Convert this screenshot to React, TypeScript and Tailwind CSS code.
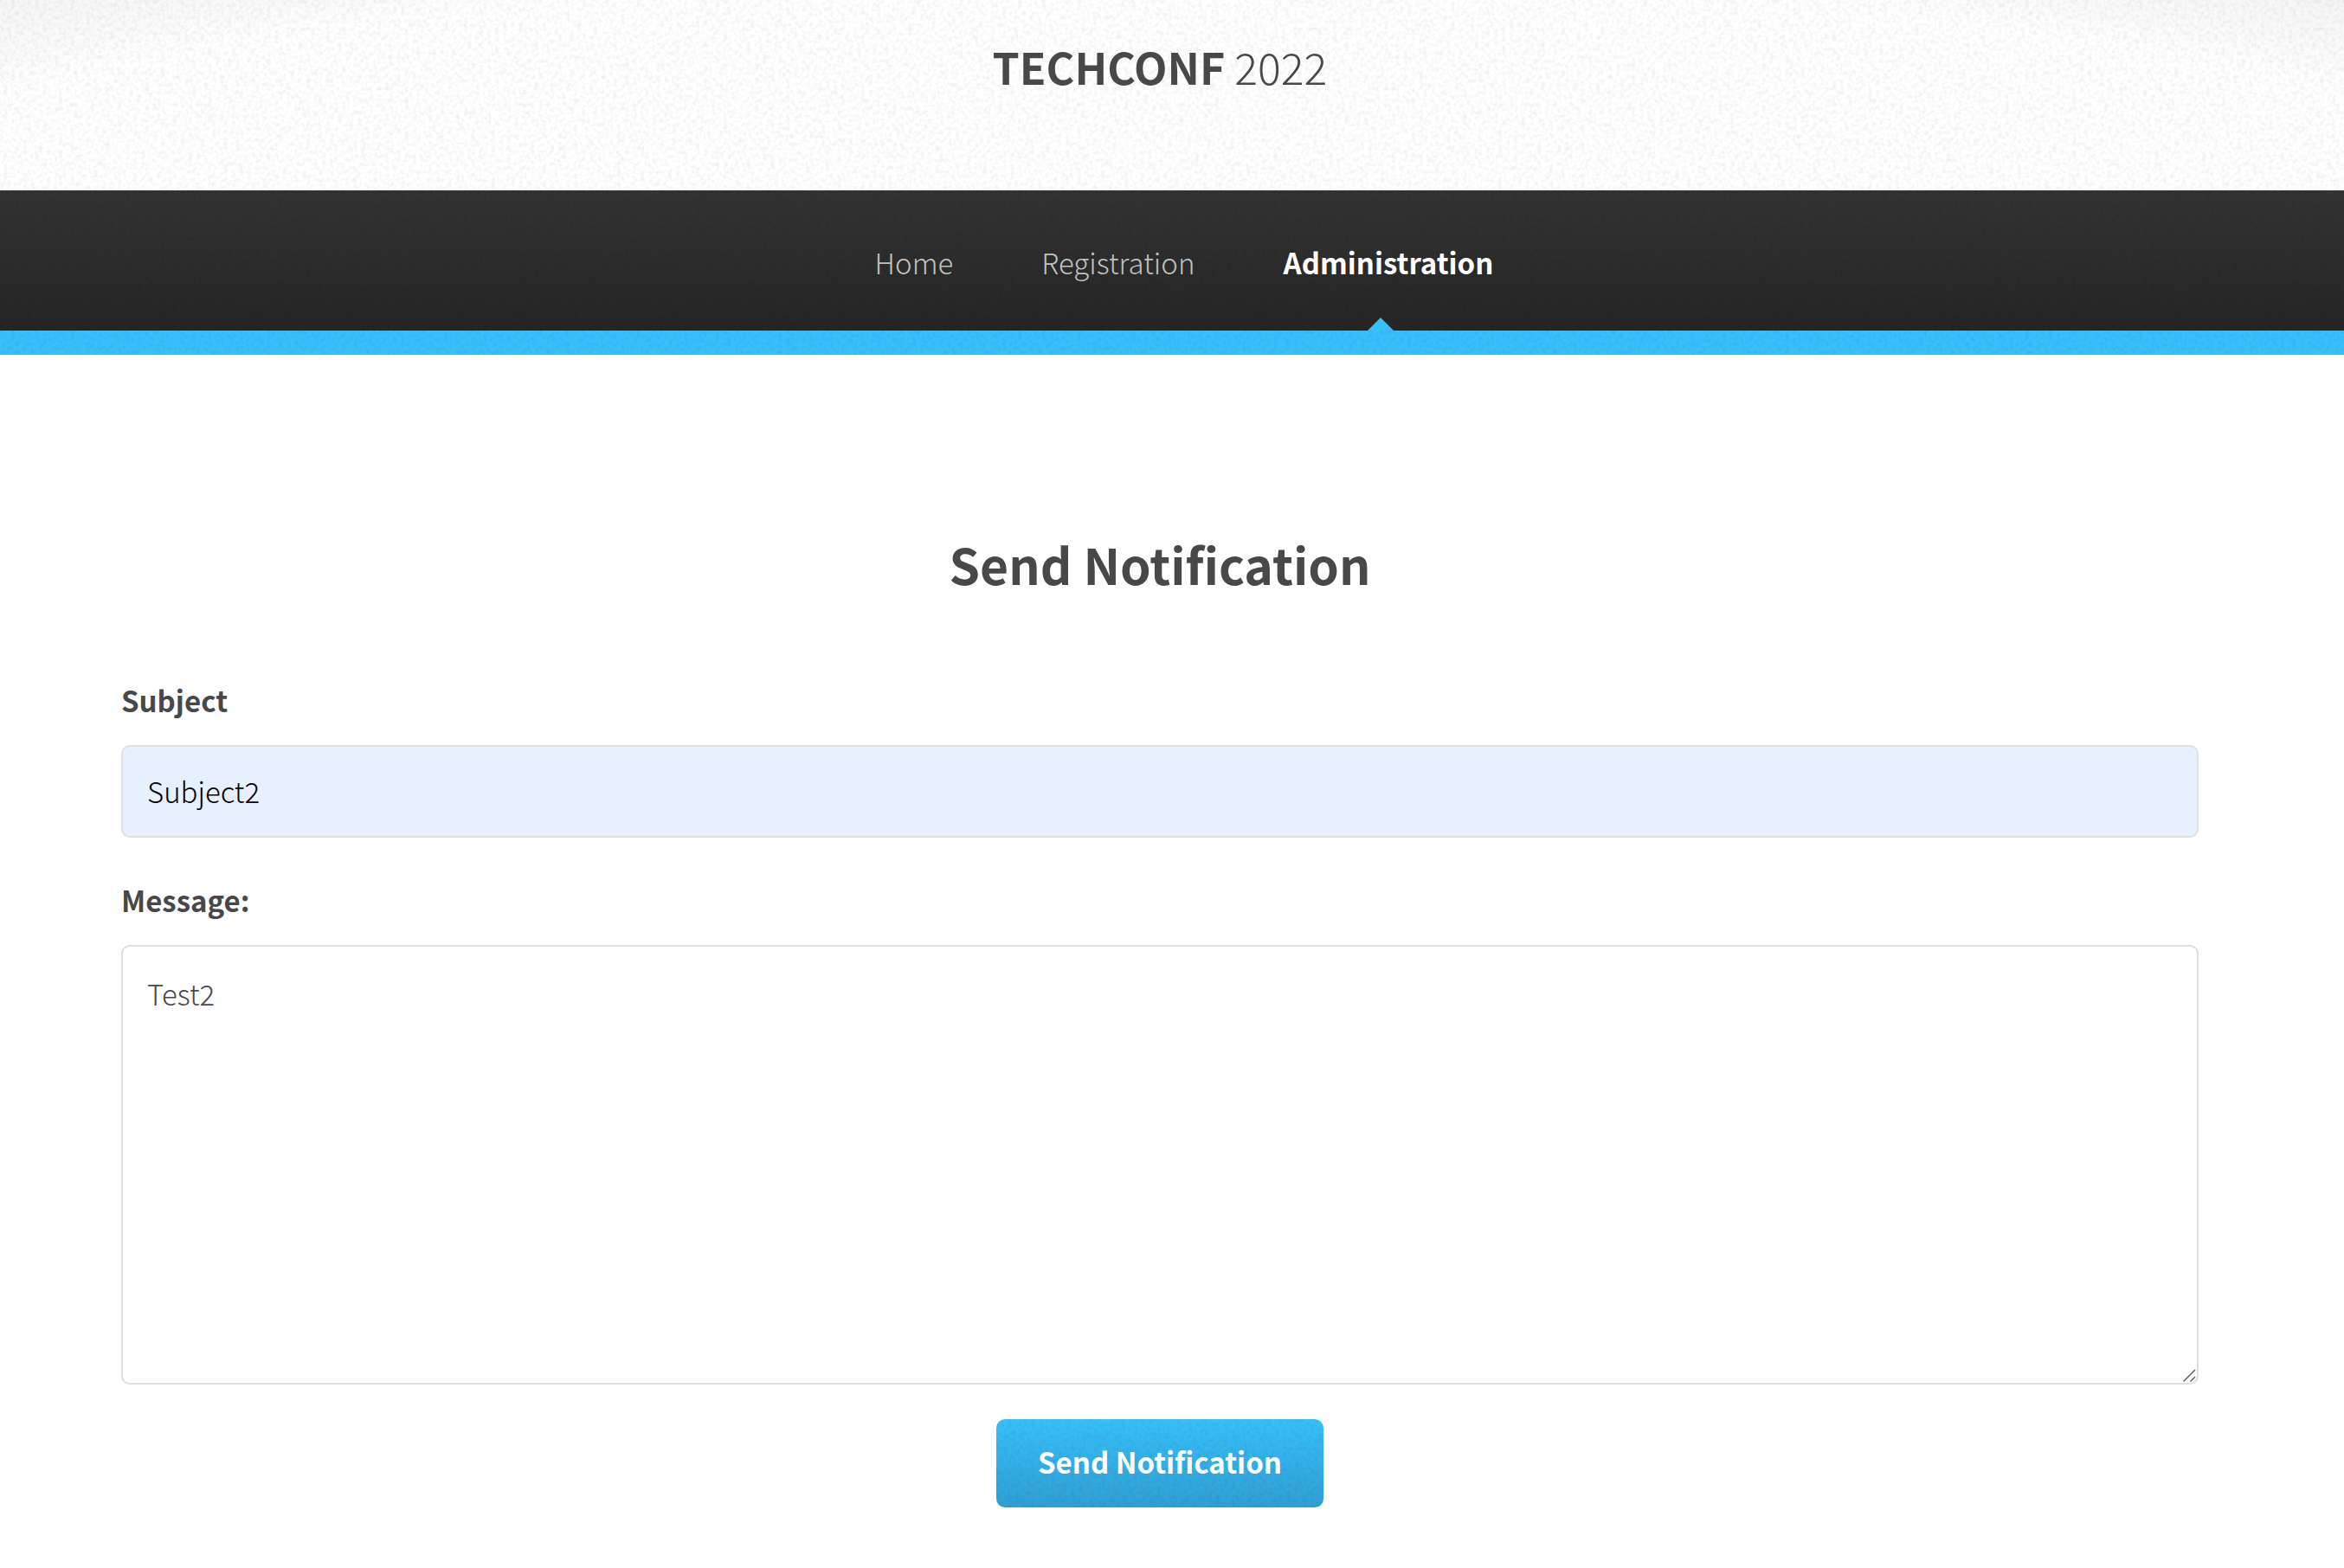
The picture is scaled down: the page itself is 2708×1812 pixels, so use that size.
import { useId } from "react";

const FONT = "font-['Source_Sans_Pro','Noto_Sans_CJK_SC','Noto_Sans',sans-serif]";

function Grain() {
  const id = useId();
  return (
    <svg aria-hidden="true" className="pointer-events-none absolute inset-0 size-full">
      <filter id={id} x="0" y="0" width="100%" height="100%">
        <feTurbulence type="fractalNoise" baseFrequency="0.22" numOctaves="2" seed="4" stitchTiles="stitch" />
        <feColorMatrix values="0 0 0 0 0  0 0 0 0 0  0 0 0 0 0  0.14 0 0 0 -0.058" />
      </filter>
      <rect width="100%" height="100%" filter={`url(#${id})`} />
    </svg>
  );
}

const links = [
  { label: "Home", active: false },
  { label: "Registration", active: false },
  { label: "Administration", active: true },
];

export default function App() {
  return (
    <div className={`min-h-screen bg-white text-[33px] leading-[56px] font-light text-[#484848] ${FONT}`}>
      <header className="relative bg-[radial-gradient(ellipse_at_50%_100%,#ffffff_78%,#f5f5f5_100%)] pt-11 pr-7 pb-28 text-center">
        <Grain />
        <h1 className="relative text-[50px] leading-[64px]">
          <a href="#">
            <strong className="font-bold">TECHCONF</strong> 2022
          </a>
        </h1>
      </header>

      <nav className="relative bg-linear-to-b from-[#333333] to-[#252525] pr-7">
        <Grain />
        <ul className="relative flex justify-center gap-[102px] pl-14">
          {links.map((l) => (
            <li key={l.label} className="relative pt-[55px] pb-[51px]">
              <a href="#" className={l.active ? "font-bold text-white" : "text-[#c0c0c0]"}>
                {l.label}
              </a>
              {l.active && (
                <svg aria-hidden="true" viewBox="0 0 30 15" className="absolute bottom-0 left-1/2 h-[15px] w-[30px] -translate-x-6 fill-[#37c0fb]">
                  <path d="M0 15 15 0 30 15Z" />
                </svg>
              )}
            </li>
          ))}
        </ul>
      </nav>
      <div className="relative h-7 bg-[#37c0fb]">
        <Grain />
      </div>

      <main className="pt-[203px] pr-7 pb-[70px]">
        <form className="mx-auto flex max-w-[2400px] flex-col" onSubmit={(e) => e.preventDefault()}>
          <h2 className="text-center text-[57px] leading-[76px] font-bold">Send Notification</h2>

          <label htmlFor="subject" className="mt-[92px] font-bold">
            Subject
          </label>
          <input
            id="subject"
            type="text"
            defaultValue="Subject2"
            className="mt-6 h-[107px] w-full rounded-[10px] border-2 border-[#e0e0e0] bg-[#e6f0ff] px-7 pb-0.5 text-black outline-none"
          />

          <label htmlFor="message" className="mt-11 font-bold">
            Message:
          </label>
          <div className="relative mt-6 flex">
            <textarea
              id="message"
              defaultValue="Test2"
              className="h-[508px] w-full resize-none rounded-[10px] border-2 border-[#e0e0e0] bg-white px-7 pt-[26px] pb-7 outline-none"
            />
            <svg aria-hidden="true" viewBox="0 0 16 16" className="pointer-events-none absolute right-[3px] bottom-[3px] size-4" fill="none" stroke="#5f5f5f" strokeWidth="1.5">
              <path d="M1.500 15.500 15 2M9.500 15.500 15 10" />
            </svg>
          </div>

          <button
            type="submit"
            className="relative mt-10 self-center overflow-hidden rounded-[10px] bg-linear-to-b from-[#37c0fb] to-[#2f9fd4] px-12 pt-[21px] pb-[25px] font-bold text-white"
          >
            <Grain />
            <span className="relative">Send Notification</span>
          </button>
        </form>
      </main>
    </div>
  );
}
